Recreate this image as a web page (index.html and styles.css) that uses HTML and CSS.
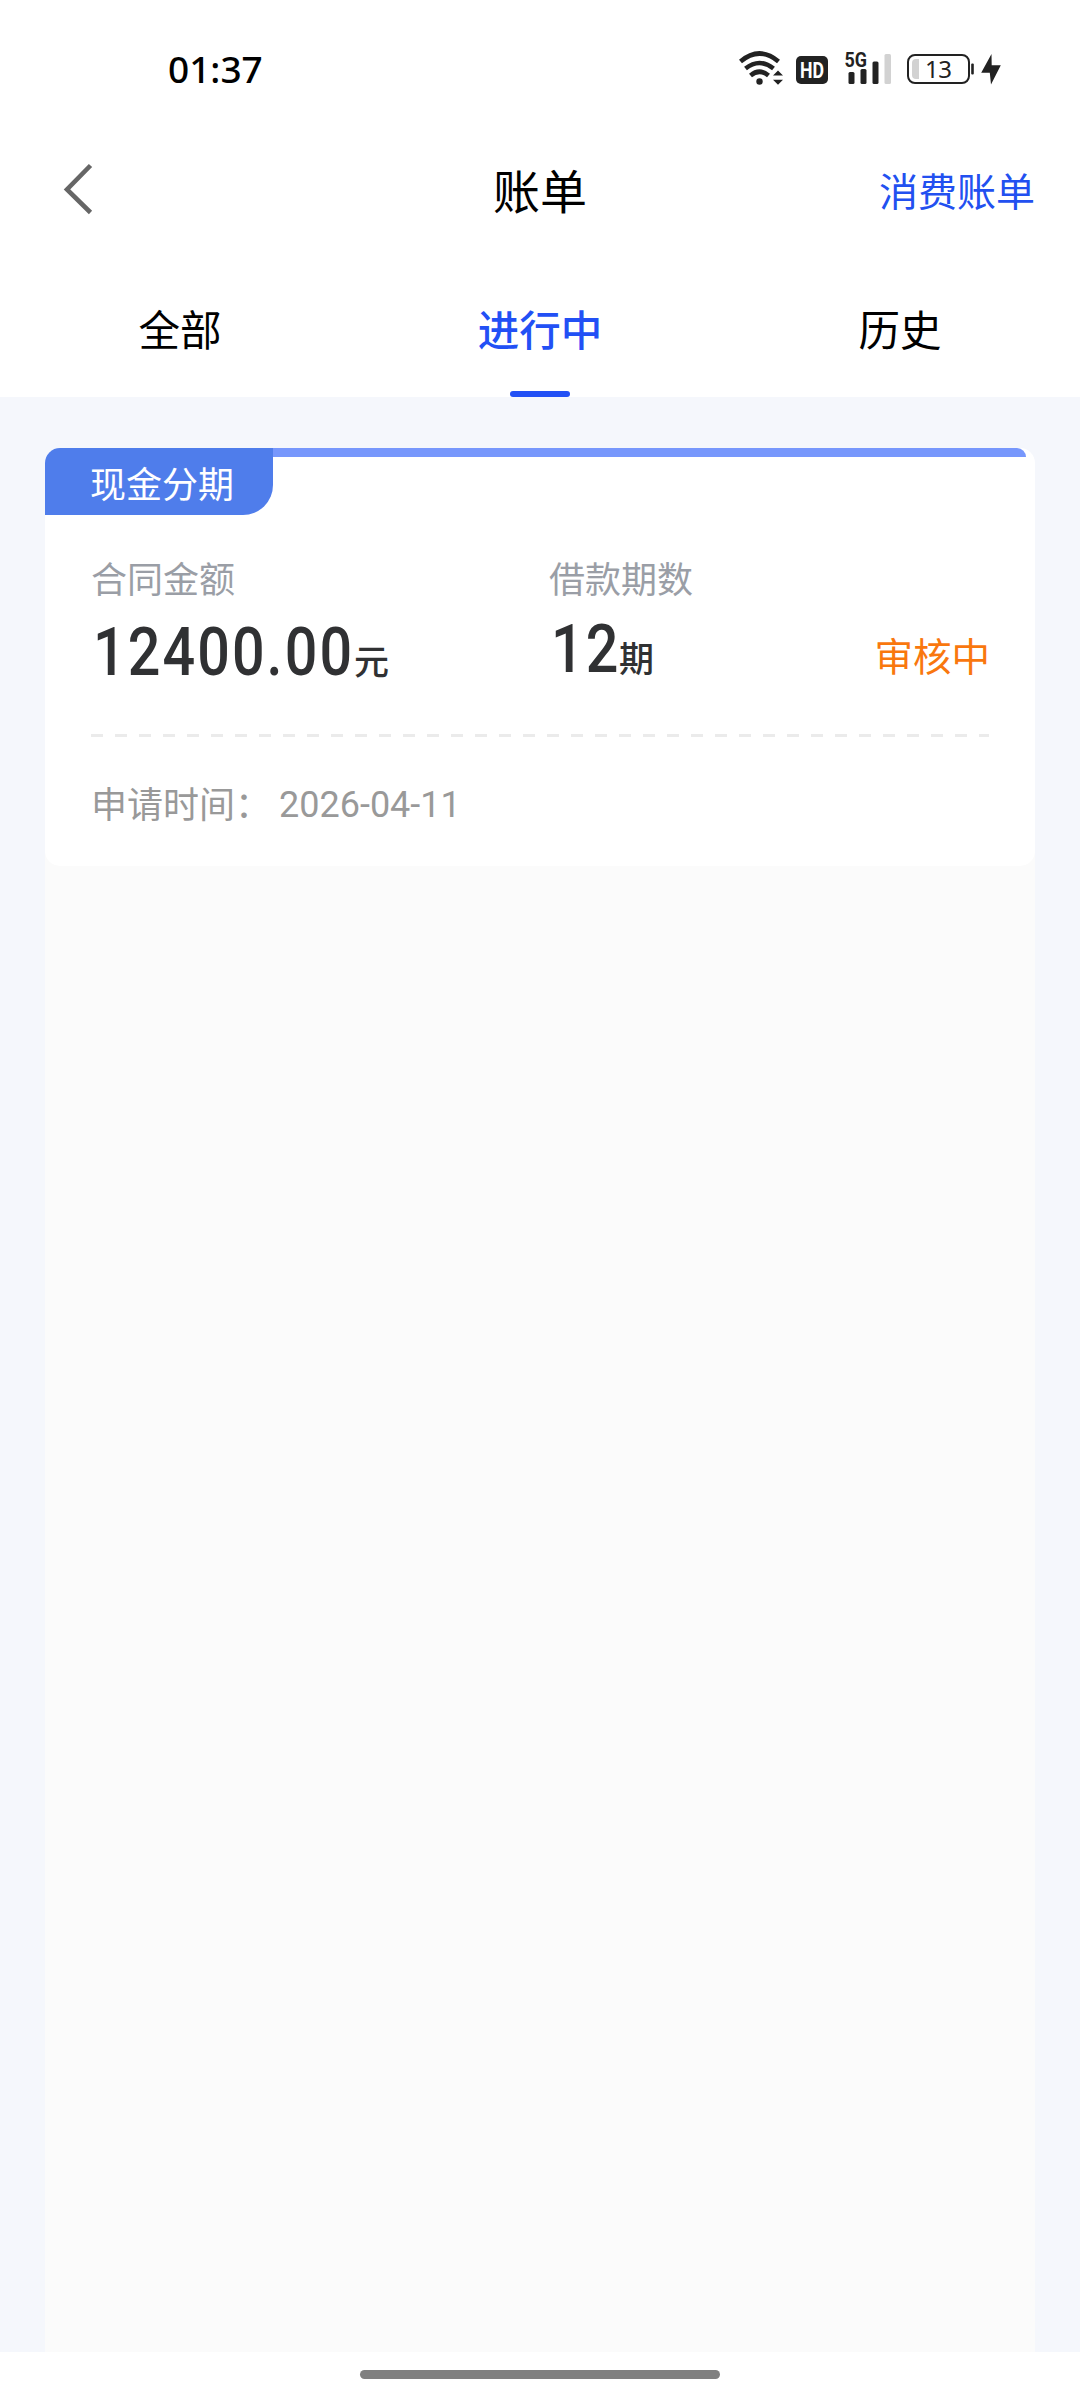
FILE: index.html
```html
<!DOCTYPE html>
<html lang="zh-CN">
<head>
<meta charset="utf-8">
<title>账单</title>
<link rel="stylesheet" href="styles.css">
</head>
<body>
<div class="screen">
  <div class="status">
    <span class="clock">01:37</span>
    <div class="status-icons">
      <svg class="wifi" width="46" height="36" viewBox="738 50 46 36">
        <g fill="none" stroke="#222" stroke-width="4.6">
          <path d="M740.5 61.500Q759.500 45.500 778.500 61.500"/>
          <path d="M745.500 68.500Q759.500 57.500 773.500 68.500"/>
          <path d="M750.500 75.500Q759.500 68 768.500 75.500"/>
        </g>
        <circle cx="759.500" cy="81.500" r="3.200" fill="#222"/>
        <path d="M773 75.500L778 70.500L783 75.500ZM773 79.800H783L778 84.800Z" fill="#222"/>
      </svg>
      <svg class="hd" width="32" height="28" viewBox="0 0 32 28">
        <rect width="32" height="28" rx="5" fill="#222"/>
        <text x="4" y="21.500" textLength="24" lengthAdjust="spacingAndGlyphs" class="hd-text">HD</text>
      </svg>
      <svg class="signal" width="48" height="46" viewBox="844 45 48 46">
        <g fill="#222">
          <rect x="848.500" y="72" width="6" height="12" rx="1.500"/>
          <rect x="860.500" y="69" width="6" height="15" rx="1.500"/>
          <rect x="872.500" y="61.500" width="6" height="22.500" rx="1.500"/>
        </g>
        <rect x="884.500" y="54" width="6.500" height="30" rx="1.500" fill="#d2d2d2"/>
        <text x="844.500" y="67" textLength="22.500" lengthAdjust="spacingAndGlyphs" class="net-text">5G</text>
      </svg>
      <svg class="battery" width="68" height="46" viewBox="907 46 68 46">
        <rect x="908" y="55" width="61" height="28" rx="7" fill="none" stroke="#222" stroke-width="2"/>
        <path d="M919 59V79H916Q912 79 912 75V63Q912 59 916 59Z" fill="#d2d2d2"/>
        <rect x="971.200" y="63.500" width="2.600" height="11" rx="1" fill="#222"/>
        <text x="925" y="77.500" textLength="27" class="bat-text">13</text>
      </svg>
      <svg class="bolt" width="20" height="31" viewBox="981 54 20 31">
        <path d="M991.500 54L981.200 72.800H989.800L991 84.500L1000.800 65.200H991.700Z" fill="#222"/>
      </svg>
    </div>
  </div>
  <header class="nav">
    <svg class="back" width="32" height="54" viewBox="62 162 32 54">
      <path d="M90.500 165.500L67 189.500L90.500 212.500" fill="none" stroke="#666" stroke-width="4.6"/>
    </svg>
    <h1 class="title">账单</h1>
    <a class="nav-link">消费账单</a>
  </header>
  <nav class="tabs">
    <div class="tab">全部</div>
    <div class="tab active">进行中</div>
    <div class="tab">历史</div>
  </nav>
  <main class="content">
    <div class="list">
      <section class="card">
        <div class="card-top">
          <div class="tag">现金分期</div>
          <div class="strip"></div>
        </div>
        <div class="figures">
          <div class="figure amount">
            <div class="label">合同金额</div>
            <div class="value"><span class="number">12400.00</span><span class="unit">元</span></div>
          </div>
          <div class="figure periods">
            <div class="label">借款期数</div>
            <div class="value"><span class="number">12</span><span class="unit">期</span></div>
          </div>
          <div class="state">审核中</div>
        </div>
        <div class="divider"></div>
        <div class="applied"><span class="applied-label">申请时间：</span><span>2026-04-11</span></div>
      </section>
    </div>
  </main>
  <footer class="home"><div class="home-bar"></div></footer>
</div>
</body>
</html>
```
FILE: styles.css
```css
* { box-sizing: border-box; }
body {
  margin: 0;
  background: #fff;
  font-family: "Noto Sans CJK SC", sans-serif;
  color: #000;
}
.screen { width: 1080px; height: 2400px; display: flex; flex-direction: column; overflow: hidden; }

.status { height: 140px; padding: 0 79px 0 168px; display: flex; justify-content: space-between; align-items: center; }
.clock { margin-top: -2px; font: 500 37px/50px "Noto Sans", sans-serif; }
.status-icons { display: flex; align-items: center; }
.status-icons svg { display: block; }
.wifi { margin-top: -4px; }
.hd { margin-left: 12px; }
.signal { margin: -4px 0 0 16px; }
.battery { margin: -2px 0 0 15px; }
.bolt { margin: -1px 0 0 6px; }
.hd-text { font: 700 21.500px "Roboto", sans-serif; fill: #fff; }
.net-text { font: 700 20.500px "Roboto", sans-serif; fill: #222; stroke: #fff; stroke-width: 2px; paint-order: stroke; }
.bat-text { font: 400 24px "Noto Sans", sans-serif; fill: #222; }

.nav { height: 98px; padding: 0 45px 0 62px; display: grid; grid-template-columns: 1fr auto 1fr; align-items: center; }
.back { display: block; }
.title { margin: 0 0 0 -17px; font-size: 47px; line-height: 60px; font-weight: 400; }
.nav-link { justify-self: end; font-size: 39px; line-height: 50px; color: #2250f0; }

.tabs { height: 159px; display: grid; grid-template-columns: repeat(3, 1fr); }
.tab { display: flex; flex-direction: column; align-items: center; padding-top: 60px; font-size: 41.500px; line-height: 60px; }
.active { color: #2250f5; font-weight: 500; }
.active::after { content: ""; width: 60px; height: 6px; margin-top: 33px; border-radius: 3px; background: #2250f5; }

.content { flex: 1; padding: 51px 45px 0; background: #f5f7fc; display: flex; }
.list { flex: 1; background: linear-gradient(#f5f7fc 18px, #fbfbfb 18px); }
.card { height: 418px; border-radius: 15px; background: #fff; overflow: hidden; }
.card-top { height: 67px; display: flex; }
.tag { width: 228px; height: 67px; padding-left: 45px; border-radius: 0 0 30px 0; background: #4f7deb; color: #fff; font-size: 36px; line-height: 68px; }
.strip { flex: 1; height: 9px; margin-right: 9px; border-radius: 0 9px 0 0; background: #7797fc; }

.figures { height: 219px; padding: 37px 45px 0 46px; display: flex; align-items: flex-start; }
.amount { width: 458px; }
.figure { color: #303133; }
.label { font-size: 36px; line-height: 50px; color: #9a9ea6; }
.value { display: flex; align-items: baseline; line-height: 80px; white-space: nowrap; }
.amount .value { padding-top: 11px; }
.periods .value { padding-top: 8px; }
/* condensed digits */
.number { margin-left: 2px; font: 500 66px/80px "Roboto", sans-serif; letter-spacing: 2.400px; transform: scaleX(.87); transform-origin: left; }
.amount .number { width: 261px; }
.periods .number { width: 68px; }
.unit { font: 500 35px/50px "Noto Sans CJK SC", sans-serif; }
.state { margin: 77px 0 0 auto; font-size: 38.500px; line-height: 50px; color: #f9770e; }
.divider { height: 3px; margin: 0 46px; background: repeating-linear-gradient(90deg, #ebebeb 0 12px, transparent 12px 24px); }
.applied { padding: 40px 0 0 46px; display: flex; font: 400 36px/56px "Roboto", "Noto Sans CJK SC", sans-serif; color: #999; }
.applied-label { width: 188px; padding-top: 1px; }

.home { height: 48px; padding-top: 18px; }
.home-bar { width: 360px; height: 9px; margin: 0 auto; border-radius: 5px; background: #808080; }
```
